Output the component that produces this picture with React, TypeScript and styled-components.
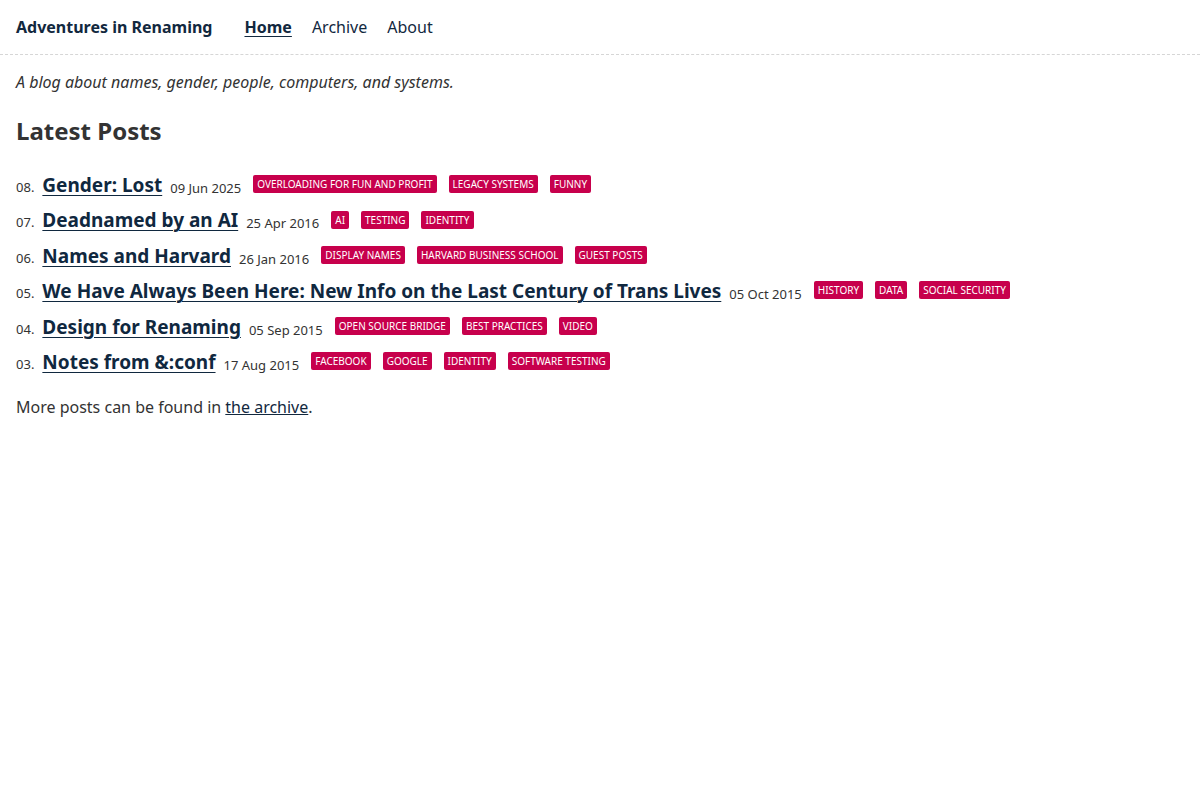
import styled, { createGlobalStyle } from "styled-components";

const GlobalStyle = createGlobalStyle`
  body {
    margin: 0;
    background: #fff;
    font-family: "Noto Sans", "Open Sans", sans-serif;
    color: #333;
  }
`;

type Post = {
  num: string;
  title: string;
  date: string;
  tags: string[];
};

const posts: Post[] = [
  { num: "08", title: "Gender: Lost", date: "09 Jun 2025", tags: ["Overloading for Fun and Profit", "Legacy Systems", "Funny"] },
  { num: "07", title: "Deadnamed by an AI", date: "25 Apr 2016", tags: ["AI", "Testing", "Identity"] },
  { num: "06", title: "Names and Harvard", date: "26 Jan 2016", tags: ["Display Names", "Harvard Business School", "Guest Posts"] },
  { num: "05", title: "We Have Always Been Here: New Info on the Last Century of Trans Lives", date: "05 Oct 2015", tags: ["History", "Data", "Social Security"] },
  { num: "04", title: "Design for Renaming", date: "05 Sep 2015", tags: ["Open Source Bridge", "Best Practices", "Video"] },
  { num: "03", title: "Notes from &:conf", date: "17 Aug 2015", tags: ["Facebook", "Google", "Identity", "Software Testing"] },
];

export default function App() {
  return (
    <>
      <GlobalStyle />
      <Header>
        <SiteTitle href="#">Adventures in Renaming</SiteTitle>
        <Nav>
          <NavLink href="#" $active>Home</NavLink>
          <NavLink href="#">Archive</NavLink>
          <NavLink href="#">About</NavLink>
        </Nav>
      </Header>
      <Main>
        <Tagline>A blog about names, gender, people, computers, and systems.</Tagline>
        <Heading>Latest Posts</Heading>
        <PostList>
          {posts.map((p) => (
            <PostRow key={p.num}>
              <PostNum>{p.num}.</PostNum>
              <PostTitle href="#">{p.title}</PostTitle>
              <PostDate>{p.date}</PostDate>
              <Tags>
                {p.tags.map((t) => (
                  <Tag key={t} href="#">{t}</Tag>
                ))}
              </Tags>
            </PostRow>
          ))}
        </PostList>
        <More>
          More posts can be found in <MoreLink href="#">the archive</MoreLink>.
        </More>
      </Main>
    </>
  );
}

const Header = styled.header`
  display: flex;
  align-items: center;
  gap: 32px;
  height: 55px;
  padding: 0 16px;
  box-sizing: border-box;
  border-bottom: 1px dashed #d6d6d6;
`;

const SiteTitle = styled.a`
  color: #12283e;
  font-weight: 700;
  font-size: 16px;
  text-decoration: none;
`;

const Nav = styled.nav`
  display: flex;
  gap: 20px;
`;

const NavLink = styled.a<{ $active?: boolean }>`
  color: #12283e;
  font-size: 16px;
  font-weight: ${({ $active }) => ($active ? 700 : 400)};
  text-decoration: ${({ $active }) => ($active ? "underline" : "none")};
  text-underline-offset: 3px;
`;

const Main = styled.main`
  padding: 15px 16px;
`;

const Tagline = styled.p`
  margin: 0;
  font-style: italic;
  font-size: 16px;
  line-height: 24px;
`;

const Heading = styled.h2`
  margin: 20px 0 25px;
  font-size: 24px;
  font-weight: 700;
  color: #333;
`;

const PostList = styled.div`
  display: flex;
  flex-direction: column;
  gap: 7px;
`;

const PostRow = styled.div`
  display: flex;
  align-items: baseline;
  height: 28.4px;
`;

const PostNum = styled.span`
  font-size: 13px;
  color: #333;
  margin-right: 8px;
`;

const PostTitle = styled.a`
  font-size: 19px;
  font-weight: 700;
  color: #10283f;
  text-decoration: underline;
  text-decoration-thickness: 1px;
  text-underline-offset: 3px;
  margin-right: 8px;
`;

const PostDate = styled.span`
  font-size: 13px;
  color: #333;
  margin-right: 12px;
  position: relative;
  top: 1px;
`;

const Tags = styled.span`
  display: flex;
  gap: 12px;
  align-self: center;
  position: relative;
  top: -2px;
`;

const Tag = styled.a`
  background: #c7004c;
  color: #fff;
  font-size: 10px;
  font-stretch: condensed;
  text-transform: uppercase;
  text-decoration: none;
  padding: 2px 4px;
  line-height: 14px;
  border-radius: 2px;
`;

const More = styled.p`
  margin: 19px 0 0;
  font-size: 16px;
`;

const MoreLink = styled.a`
  color: #12283e;
  text-decoration: underline;
`;
